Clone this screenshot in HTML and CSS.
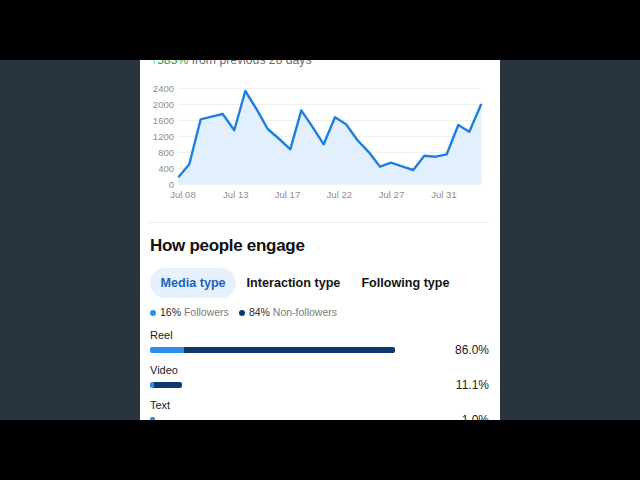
FILE: index.html
```html
<!DOCTYPE html>
<html>
	<head>
		<meta charset="UTF-8">
		<title>How people engage</title>
		<link rel="stylesheet" href="styles.css">
	</head>
	<body>
		<div class="stage">
			<div class="panel">
				<p class="change"><span class="up">&uarr;583%</span> from previous 28 days</p>
				<!-- daily views chart -->
				<svg class="chart" width="360" height="135" viewBox="0 0 360 135">
					<g class="grid">
						<line x1="38" y1="18.3" x2="341" y2="18.3"/>
						<line x1="38" y1="34.3" x2="341" y2="34.3"/>
						<line x1="38" y1="50.3" x2="341" y2="50.3"/>
						<line x1="38" y1="66.3" x2="341" y2="66.3"/>
						<line x1="38" y1="82.3" x2="341" y2="82.3"/>
						<line x1="38" y1="98.3" x2="341" y2="98.3"/>
						<line x1="38" y1="114.3" x2="341" y2="114.3"/>
					</g>
					<g class="ylab">
						<text x="34" y="21.8">2400</text>
						<text x="34" y="37.8">2000</text>
						<text x="34" y="53.8">1600</text>
						<text x="34" y="69.8">1200</text>
						<text x="34" y="85.8">800</text>
						<text x="34" y="101.8">400</text>
						<text x="34" y="117.8">0</text>
					</g>
					<polygon class="area" points="38.3,114.3 38.3,107.3 49.3,94.3 60.7,49.3 71.7,46.7 82.7,44 94.3,60.3 105.3,21 116.7,39.3 127.7,59 139.3,69 150.3,79.3 161.3,40.3 172.3,56.7 183.7,74.3 195,47.3 206,54.3 217.3,70 229,82.3 240,96.7 251,92.7 262,96.3 273.3,100 284.3,85.7 295.7,86.7 306.7,84.3 318.3,55 329.3,61.7 341.3,34 341.3,114.3"/>
					<polyline class="line" points="38.3,107.3 49.3,94.3 60.7,49.3 71.7,46.7 82.7,44 94.3,60.3 105.3,21 116.7,39.3 127.7,59 139.3,69 150.3,79.3 161.3,40.3 172.3,56.7 183.7,74.3 195,47.3 206,54.3 217.3,70 229,82.3 240,96.7 251,92.7 262,96.3 273.3,100 284.3,85.7 295.7,86.7 306.7,84.3 318.3,55 329.3,61.7 341.3,34"/>
					<g class="xlab">
						<text x="43" y="127.5">Jul 08</text>
						<text x="95.8" y="127.5">Jul 13</text>
						<text x="147.5" y="127.5">Jul 17</text>
						<text x="199.3" y="127.5">Jul 22</text>
						<text x="251.5" y="127.5">Jul 27</text>
						<text x="304" y="127.5">Jul 31</text>
					</g>
				</svg>
				<div class="divider"></div>
				<h2 class="title">How people engage</h2>
				<div class="tabs">
					<span class="tab active">Media type</span>
					<span class="tab">Interaction type</span>
					<span class="tab">Following type</span>
				</div>
				<div class="legend">
					<span class="item"><i class="dot light"></i><b>16%</b> Followers</span>
					<span class="item"><i class="dot dark"></i><b>84%</b> Non-followers</span>
				</div>
				<div class="rows">
					<div class="row">
						<div class="name">Reel</div>
						<div class="track">
							<span class="seg light" style="width: 34px"></span><span class="seg dark" style="width: 211px"></span>
						</div>
						<div class="pct">86.0%</div>
					</div>
					<div class="row">
						<div class="name">Video</div>
						<div class="track">
							<span class="seg light" style="width: 3.5px"></span><span class="seg dark" style="width: 28px"></span>
						</div>
						<div class="pct">11.1%</div>
					</div>
					<div class="row">
						<div class="name">Text</div>
						<div class="track">
							<span class="seg light" style="width: 5px"></span>
						</div>
						<div class="pct">1.0%</div>
					</div>
				</div>
			</div>
		</div>
	</body>
</html>
```

FILE: styles.css
```css
*{
	padding: 0;
	margin: 0;
	box-sizing: border-box;
}
body{
	background: #000;
	font-family: "Liberation Sans", Arial, sans-serif;
	color: #141414;
}
.stage{
	margin-top: 60px;
	height: 360px;
	background: #29343f;
	overflow: hidden;
}
.panel{
	display: flow-root;
	width: 360px;
	height: 360px;
	margin: 0 auto;
	background: #fff;
}
.change{
	margin-top: -8px;
	padding: 0 11px;
	font-size: 12.2px;
	line-height: 16px;
	color: #6b6b6b;
}
.change .up{
	color: #2f9a48;
}
.chart{
	display: block;
	margin-top: 2px;
}
.grid line{
	stroke: #ececec;
	stroke-width: 1;
}
.ylab text{
	font-size: 9.5px;
	fill: #8e8e8e;
	text-anchor: end;
}
.xlab text{
	font-size: 9.5px;
	fill: #8e8e8e;
	text-anchor: middle;
}
.area{
	fill: #e2effd;
}
.line{
	fill: none;
	stroke: #1f7fe0;
	stroke-width: 2.4;
	stroke-linejoin: round;
}
.divider{
	height: 1px;
	margin: 17px 10px 0 8px;
	background: #ededed;
}
.title{
	margin-top: 13px;
	padding: 0 10px;
	font-size: 17px;
	line-height: 20px;
	font-weight: bold;
	letter-spacing: -0.3px;
	color: #111;
}
.tabs{
	display: flex;
	margin-top: 12px;
	padding: 0 10px;
}
.tab{
	height: 30px;
	padding: 0 10.5px;
	border-radius: 15px;
	font-size: 12.6px;
	line-height: 30px;
	font-weight: bold;
	color: #141414;
}
.tab.active{
	background: #e7f1fc;
	color: #1766c2;
}
.legend{
	display: flex;
	gap: 10px;
	margin-top: 7px;
	padding: 0 10px;
	font-size: 10.5px;
	line-height: 14px;
	color: #7a7a7a;
}
.legend b{
	font-weight: normal;
	color: #2a2a2a;
}
.dot{
	display: inline-block;
	width: 6px;
	height: 6px;
	margin-right: 4px;
	border-radius: 50%;
	vertical-align: 0;
}
.light{
	background: #2b8cf0;
}
.dark{
	background: #0c3a6e;
}
.rows{
	display: flex;
	flex-direction: column;
	gap: 10px;
	margin-top: 9px;
	padding: 0 10px;
}
.row{
	display: grid;
	grid-template-columns: 285px 1fr;
	grid-template-rows: 14px 6px;
	row-gap: 5px;
}
.name{
	grid-column: 1 / 3;
	font-size: 11px;
	line-height: 14px;
	color: #222;
}
.track{
	display: flex;
	height: 6px;
}
.seg{
	height: 6px;
}
.seg:first-child{
	border-radius: 2px 0 0 2px;
}
.seg:last-child{
	border-radius: 0 2px 2px 0;
}
.seg:only-child{
	border-radius: 2px;
}
.pct{
	align-self: center;
	text-align: right;
	font-size: 12px;
	line-height: 14px;
	margin-right: 1px;
	color: #222;
}
```
